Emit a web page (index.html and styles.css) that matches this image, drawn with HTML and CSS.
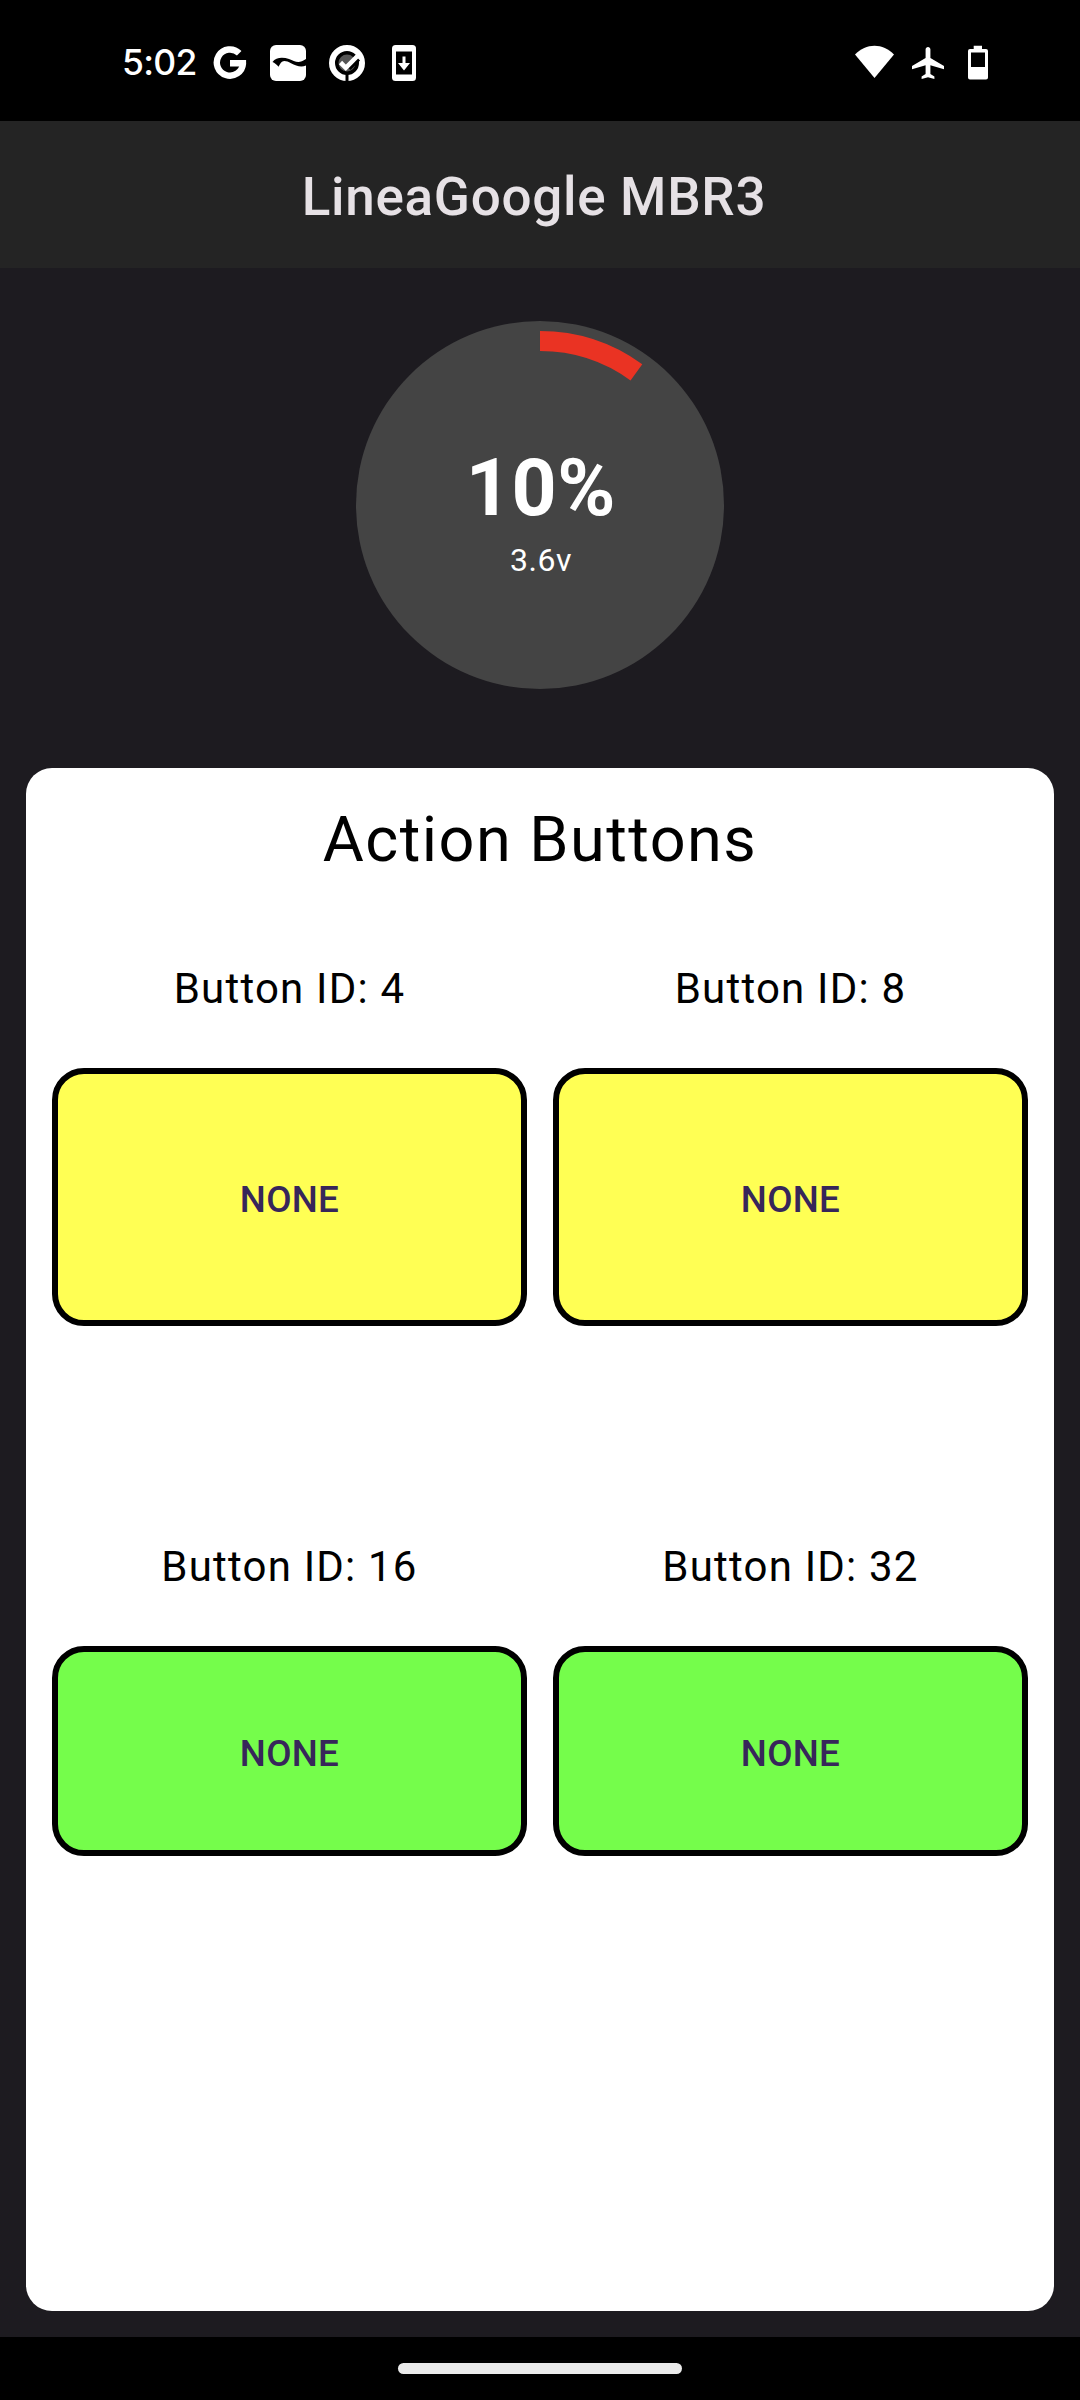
FILE: index.html
```html
<!DOCTYPE html>
<html lang="en">
<head>
<meta charset="utf-8">
<title>LineaGoogle MBR3</title>
<link rel="stylesheet" href="styles.css">
</head>
<body>
<div class="screen">
  <div class="status">
    <div class="status-left">
      <span class="time">5:02</span>
      <svg width="34" height="36" viewBox="0 0 34 36"><path d="M26.2 8.3A13.1 13.1 0 1 0 30 18.5" fill="none" stroke="#fff" stroke-width="6.4"/><path d="M17 15H33.1V19H30V21.5H17Z" fill="#fff"/></svg>
      <svg width="36" height="36" viewBox="0 0 36 36"><rect width="36" height="36" rx="6" fill="#fff"/><path d="M2.500 17C6 12 13 12 19 14C25 16.500 29 19 36 14V20.500C31 22.500 26 20.800 21 18.200C17 16 14 15.500 12 16.800C10.300 18 9.800 19.700 8.500 21.800C7 19.500 4.500 18 2.500 17Z" fill="#000"/></svg>
      <svg class="check-icon" width="36" height="36" viewBox="0 0 36 36"><circle cx="18" cy="18" r="15" fill="none" stroke="#fff" stroke-width="6"/><circle cx="18" cy="18" r="8.500" fill="#555"/><path d="M20.500 24L30 14.500" fill="none" stroke="#000" stroke-width="3"/><path d="M11.500 17.500L16.800 22.800L29 10.500" fill="none" stroke="#fff" stroke-width="4.600"/><path d="M18 28V36" stroke="#000" stroke-width="3"/></svg>
      <svg class="update-icon" width="24" height="36" viewBox="0 0 24 36"><rect width="24" height="36" rx="3.500" fill="#fff"/><path d="M4 6.500H20V29.500H4Z" fill="#000"/><path d="M10.500 11.500H13.500V18H18L12 25.500L6 18H10.500Z" fill="#fff"/></svg>
    </div>
    <div class="status-right">
      <svg width="39" height="36" viewBox="0 0 39 36"><path d="M0 9.500C11 -2.300 28 -2.300 39 9.500L19.500 33Z" fill="#fff"/></svg>
      <svg width="32" height="36" viewBox="2 .8 20 22.500"><path d="M22 16v-2l-8.500-5V3.500C13.500 2.670 12.830 2 12 2s-1.500.67-1.500 1.500V9L2 14v2l8.500-2.500V19L8 20.500V22l4-1 4 1v-1.500L13.500 19v-5.500z" fill="#fff"/></svg>
      <svg width="20" height="36" viewBox="0 0 20 36"><path fill-rule="evenodd" d="M5.700 .8H14V4H18Q20 4 20 6V32.500Q20 34.500 18 34.500H2Q0 34.500 0 32.500V6Q0 4 2 4H5.700ZM3 7.500V22H17V7.500Z" fill="#fff"/></svg>
    </div>
  </div>
  <header class="appbar">LineaGoogle MBR3</header>
  <main class="content">
    <div class="gauge">
      <svg class="gauge-arc" width="368" height="368" viewBox="0 0 368 368"><path d="M184 20A164 164 0 0 1 280.400 51.320" fill="none" stroke="#ea3323" stroke-width="20"/></svg>
      <div class="percent">10%</div>
      <div class="volts">3.6v</div>
    </div>
    <section class="panel">
      <h1 class="panel-title">Action Buttons</h1>
      <div class="grid">
        <div class="cell"><div class="label">Button ID: 4</div><button class="action yellow">NONE</button></div>
        <div class="cell"><div class="label">Button ID: 8</div><button class="action yellow">NONE</button></div>
        <div class="cell"><div class="label">Button ID: 16</div><button class="action green">NONE</button></div>
        <div class="cell"><div class="label">Button ID: 32</div><button class="action green">NONE</button></div>
      </div>
    </section>
  </main>
  <div class="navbar"><div class="handle"></div></div>
</div>
</body>
</html>
```
FILE: styles.css
```css
* { box-sizing: border-box; }
body { margin: 0; background: #000; font-family: Roboto, "Liberation Sans", sans-serif; }
svg { display: block; flex: none; }
.screen { width: 1080px; height: 2400px; display: flex; flex-direction: column; }
.status { height: 121px; display: flex; justify-content: space-between; align-items: flex-start; padding: 44.5px 92px 0 122px; color: #fff; }
.status-left { display: flex; gap: 23px; }
.check-icon { margin-left: -0.5px; }
.update-icon { margin-left: 4.5px; }
.time { width: 68px; line-height: 36px; font-family: Inter, sans-serif; font-size: 35.5px; font-weight: 500; letter-spacing: -0.7px; white-space: nowrap; }
.status-right { display: flex; gap: 18px; }
.status-right svg:last-child { margin-left: 6px; }
.appbar { height: 147px; padding: 5px 12px 0 0; background: #242424; color: #e6e1e5; display: flex; align-items: center; justify-content: center; font-size: 53px; font-weight: 500; letter-spacing: 0.7px; }
.content { flex: 1; background: #1d1b20; padding: 53px 26px 26px; display: flex; flex-direction: column; align-items: center; }
.gauge { position: relative; width: 368px; height: 368px; flex: none; padding: 121px 0 0 2px; border-radius: 50%; background: #444; color: #fff; text-align: center; letter-spacing: 0.035em; }
.gauge-arc { position: absolute; left: 0; top: 0; }
.percent { font-size: 78.75px; line-height: 92px; font-weight: 700; }
.volts { margin-top: 8px; font-size: 32px; line-height: 37px; }
.panel { flex: 1; align-self: stretch; margin-top: 79px; padding: 35px 26px 0; background: #fff; border-radius: 26px; color: #000; text-align: center; }
.panel-title { margin: 0 0 87px; font-size: 63px; line-height: 74px; font-weight: 400; letter-spacing: 1.45px; }
.grid { display: grid; grid-template-columns: 1fr 1fr; column-gap: 26px; row-gap: 216px; }
.cell { display: flex; flex-direction: column; }
.label { margin-bottom: 55px; font-size: 42px; line-height: 49px; letter-spacing: 1.2px; }
.action { border: 6px solid #000; border-radius: 32px; padding: 5px 0 0; font: 500 36.75px Roboto, sans-serif; letter-spacing: 0.00714em; color: #37265a; }
.yellow { height: 258px; background: #ffff54; }
.green { height: 210px; background: #75fd4b; }
.navbar { height: 63px; padding-top: 26px; display: flex; justify-content: center; }
.handle { width: 284px; height: 11px; border-radius: 5.5px; background: #ebebeb; }
```
